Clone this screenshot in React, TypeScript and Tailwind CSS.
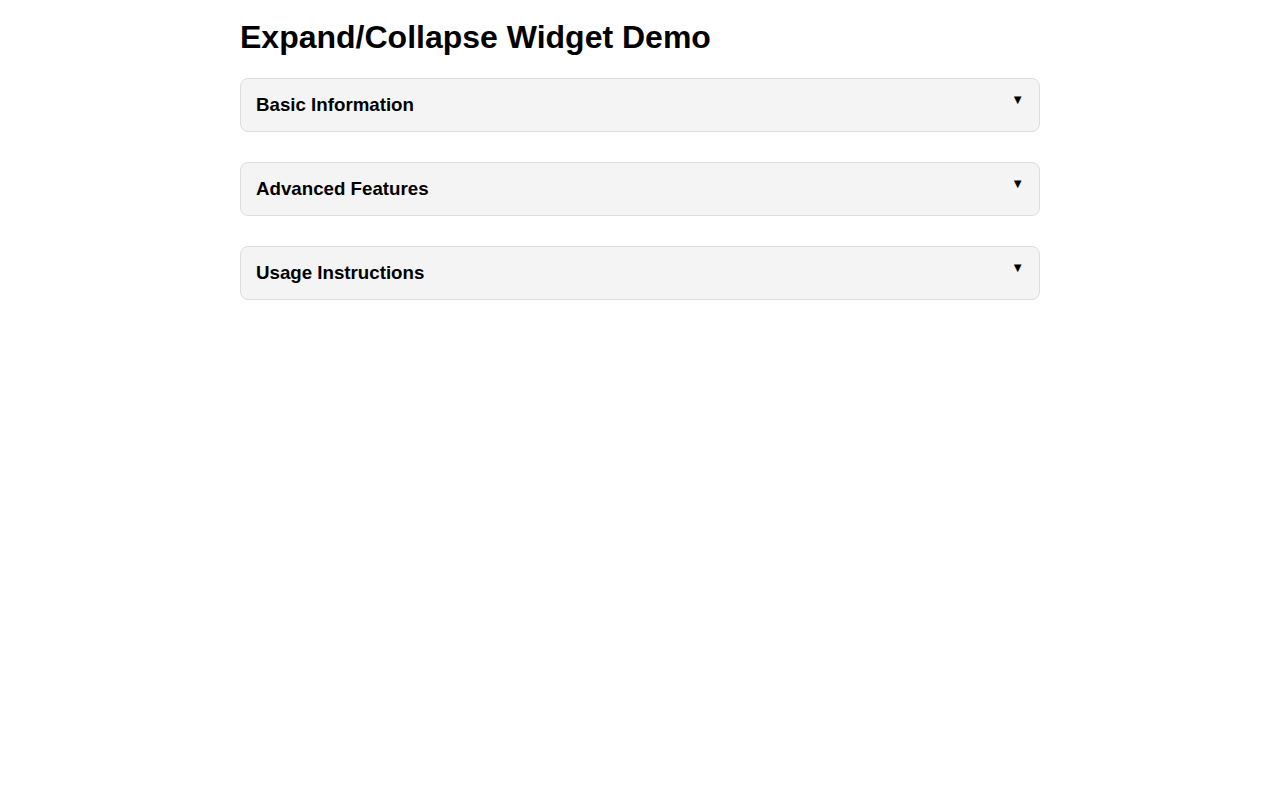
import React, { useState } from "react";

type Section = {
  id: string;
  title: string;
  body: string;
};

const sections: Section[] = [
  {
    id: "basic",
    title: "Basic Information",
    body: "This widget lets you show and hide blocks of content by clicking on their headers.",
  },
  {
    id: "advanced",
    title: "Advanced Features",
    body: "Each section keeps its own open state, so several can be expanded at the same time.",
  },
  {
    id: "usage",
    title: "Usage Instructions",
    body: "Click a header to expand it. Click it again to collapse the section.",
  },
];

export default function App() {
  const [open, setOpen] = useState<Record<string, boolean>>({});

  const toggle = (id: string) => {
    setOpen((prev) => ({ ...prev, [id]: !prev[id] }));
  };

  return (
    <div
      className="min-h-screen bg-white text-black"
      style={{ fontFamily: '"Liberation Sans", Arial, sans-serif' }}
    >
      <div className="mx-auto w-[800px] pt-[19px]">
        <h1 className="text-[32px] font-bold leading-[37px] mb-[22px]">
          Expand/Collapse Widget Demo
        </h1>

        <div className="flex flex-col gap-[30px]">
          {sections.map((section) => (
            <div
              key={section.id}
              className="border border-[#dddddd] rounded-[8px] bg-[#f4f4f4] overflow-hidden"
            >
              <div
                onClick={() => toggle(section.id)}
                className="relative cursor-pointer px-[15px] py-[15px]"
              >
                <h3 className="text-[18.72px] font-bold leading-[22px]">
                  {section.title}
                </h3>
                <span className="absolute right-[15px] top-[14px] text-[13px] leading-[14px]">
                  {open[section.id] ? "▲" : "▼"}
                </span>
              </div>
              {open[section.id] && (
                <div className="bg-white px-[15px] py-[12px] text-[15px] border-t border-[#dddddd]">
                  {section.body}
                </div>
              )}
            </div>
          ))}
        </div>
      </div>
    </div>
  );
}
